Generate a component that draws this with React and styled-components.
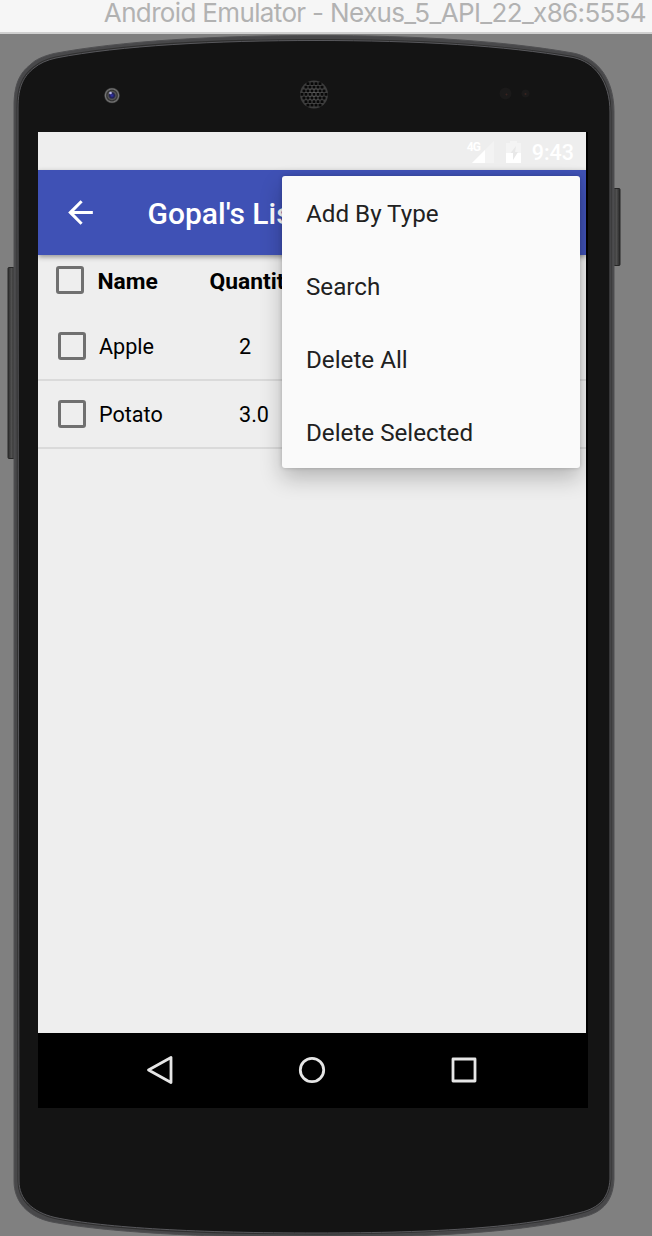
import React from "react";
import styled, { createGlobalStyle } from "styled-components";

const GlobalStyle = createGlobalStyle`
  * { box-sizing: border-box; }
  html, body { margin: 0; padding: 0; background: #808080; }
  body { overflow: hidden; font-family: Roboto, "Liberation Sans", sans-serif; }
`;

const Window = styled.div`
  width: 652px;
  height: 1236px;
  display: flex;
  flex-direction: column;
  overflow: hidden;
  background: #808080;
`;

const TitleBar = styled.header`
  flex: none;
  height: 34px;
  padding-right: 6px;
  display: flex;
  justify-content: flex-end;
  background: #f6f6f6;
  border-bottom: 2px solid #d0d0d0;
  color: #b2b2b2;
  font: 400 26px/26px Inter, sans-serif;
  letter-spacing: -0.65px;
  white-space: nowrap;
`;

const Device = styled.main`
  position: relative;
  flex: 1;
  padding: 98px 0 0 38px;
`;

const Shell = styled.svg`
  position: absolute;
  left: 0;
  top: 0;
  display: block;
`;

const Screen = styled.div`
  position: relative;
  width: 550px;
  height: 976px;
  display: flex;
  flex-direction: column;
  background: #000;
`;

const Display = styled.div`
  position: relative;
  width: 548px;
  height: 901px;
  display: flex;
  flex-direction: column;
  overflow: hidden;
  background: #eeeeee;
`;

const StatusBar = styled.div`
  flex: none;
  height: 38px;
  padding: 1px 12px 0 0;
  display: flex;
  align-items: center;
  justify-content: flex-end;
  color: #fff;
`;

const Clock = styled.span`
  padding-top: 2px;
  font-size: 21.5px;
  line-height: 35px;
  font-weight: 500;
  margin-left: 11px;
`;

const AppBar = styled.div`
  position: relative;
  flex: none;
  height: 85px;
  padding: 0 0 0 24px;
  display: flex;
  align-items: center;
  background: #3f51b5;
  color: #fff;
  box-shadow: 0 2px 5px rgba(0, 0, 0, 0.38);
`;

const AppTitle = styled.h1`
  margin: 0;
  padding: 2px 0 0 48.5px;
  font-size: 30px;
  line-height: 40px;
  font-weight: 500;
  white-space: nowrap;
`;

const Row = styled.div`
  flex: none;
  height: ${(p) => (p.$header ? 58 : 68)}px;
  padding: ${(p) => (p.$header ? "0 0 8px 18px" : "0 0 0 20px")};
  display: grid;
  grid-template-columns: ${(p) => (p.$header ? "41.5px 112px 1fr" : "41px 140px 1fr")};
  align-items: center;
  border-bottom: ${(p) => (p.$header ? "0" : "2px solid #dadada")};
  color: #000;
  font-size: ${(p) => (p.$header ? 22.8 : 21.6)}px;
  font-weight: ${(p) => (p.$header ? 700 : 400)};
  line-height: 28px;
`;

const Cell = styled.span`
  padding-top: ${(p) => (p.$header ? 3 : 2)}px;
`;

const Checkbox = styled.span`
  width: 28px;
  height: 28px;
  border: 3px solid #707070;
  border-radius: 3px;
`;

const Menu = styled.nav`
  position: absolute;
  top: 44px;
  right: 6px;
  width: 298.5px;
  height: 292px;
  display: flex;
  flex-direction: column;
  border-radius: 3px;
  background: #fafafa;
  box-shadow: 0 10px 22px rgba(0, 0, 0, 0.24), 0 0 4px rgba(0, 0, 0, 0.18);
`;

const MenuItem = styled.div`
  flex: 1;
  padding: 2px 0 0 24.5px;
  display: flex;
  align-items: center;
  color: #212121;
  font-size: 24.2px;
  line-height: 30px;
`;

const NavBar = styled.div`
  flex: 1;
  padding: 0 2px 2px 0;
  display: flex;
  align-items: center;
  justify-content: center;
  gap: 124px;
`;

const items = [
  { name: "Apple", quantity: "2" },
  { name: "Potato", quantity: "3.0" },
];
const actions = ["Add By Type", "Search", "Delete All", "Delete Selected"];

const holes = [];
for (let r = -3; r <= 3; r++) {
  for (let c = -3; c <= 3; c++) {
    const x = c * 4 + (r % 2 ? 2 : 0);
    const y = r * 3.6;
    if (Math.hypot(x, y) < 12.4) holes.push([x, y]);
  }
}

const BODY =
  "M14 150V72C14 50 20 39 30 31C36 25 44 22 54 19.500C120 7 215 1.500 316 1.500C418 1.500 505 7 573 19C598 24 614 45 614 78V1145C613 1166 604 1178 583 1183C530 1197 440 1203.500 316 1203.500C200 1203.500 105 1198 52 1188C28 1183 14 1168 14 1147Z";
const GLASS =
  "M18 150V74C18 52 24 42 34 34C40 29 47 26 56 24C120 11.500 215 6.500 316 6.500C418 6.500 505 11.500 573 23.500C595 28 610 48 610 78V1145C609 1163 600 1174 580 1178.500C525 1193 440 1199 316 1199C200 1199 105 1194 55 1183.500C32 1178 19 1165 19 1147Z";

function PhoneShell() {
  return (
    <Shell width="652" height="1202" viewBox="0 0 652 1202" aria-hidden="true">
      <defs>
        <linearGradient id="key" x1="0" x2="1" y1="0" y2="0">
          <stop offset="0" stopColor="#2c2c2c" />
          <stop offset="0.5" stopColor="#505050" />
          <stop offset="1" stopColor="#242424" />
        </linearGradient>
        <radialGradient id="lens">
          <stop offset="0" stopColor="#3333b5" />
          <stop offset="0.3" stopColor="#202050" />
          <stop offset="0.5" stopColor="#555" />
          <stop offset="0.65" stopColor="#303030" />
          <stop offset="0.82" stopColor="#777" />
          <stop offset="1" stopColor="#222" />
        </radialGradient>
        <radialGradient id="speaker">
          <stop offset="0" stopColor="#656565" />
          <stop offset="1" stopColor="#3a3a3a" />
        </radialGradient>
      </defs>
      <rect x="8" y="233.500" width="7" height="191" rx="1" fill="url(#key)" stroke="#282828" />
      <rect x="613" y="154.500" width="7" height="77" rx="1" fill="url(#key)" stroke="#262626" />
      <path d={BODY} fill="#48484a" stroke="#505052" strokeWidth="1" />
      <path d={GLASS} fill="#141414" stroke="#303030" strokeWidth="3" />
      <path d={GLASS} fill="#141414" stroke="#58585c" strokeWidth="1" />
      <circle cx="112" cy="61.500" r="8" fill="url(#lens)" />
      <circle cx="110.500" cy="59" r="1.300" fill="#b8b8e8" />
      <circle cx="314" cy="60.500" r="14" fill="url(#speaker)" />
      {holes.map(([x, y]) => (
        <rect key={`${x},${y}`} x={312.5 + x} y={59 + y} width="3" height="2.800" rx="0.600" fill="#080808" />
      ))}
      <circle cx="505.500" cy="59.500" r="6" fill="#1b1a1a" />
      <circle cx="525.500" cy="59.500" r="4" fill="#1b1a1a" />
      <circle cx="506.500" cy="60.500" r="1" fill="#3a2420" />
      <circle cx="525.500" cy="60" r="1" fill="#3a2420" />
    </Shell>
  );
}

const SignalArea = styled.div`
  display: flex;
  align-items: center;
`;

const Network = styled.span`
  align-self: flex-start;
  width: 14px;
  margin-right: -9px;
  font-size: 12px;
  line-height: 12px;
  font-weight: 700;
  letter-spacing: -0.8px;
`;

const BatteryIcon = styled.svg`
  margin-left: 12px;
`;

export default function App() {
  return (
    <Window>
      <GlobalStyle />
      <TitleBar>Android Emulator - Nexus_5_API_22_x86:5554</TitleBar>
      <Device>
        <PhoneShell />
        <Screen>
          <Display>
            <StatusBar>
              <SignalArea>
                <Network>4G</Network>
                <svg width="22" height="22" viewBox="0 0 22 22">
                  <path d="M22 0V22H0Z" fill="#f3f3f3" />
                  <path d="M13 9V22H0Z" fill="#fff" />
                </svg>
              </SignalArea>
              <BatteryIcon width="15" height="22" viewBox="0 0 15 22">
                <path d="M4 0H11V2H15V12H0V2H4Z" fill="#f4f4f4" />
                <path d="M0 12H15V22H0Z" fill="#fff" />
                <path d="M10 5L4.500 12H7V19L12 11H9Z" fill="#e8e8e8" />
              </BatteryIcon>
              <Clock>9:43</Clock>
            </StatusBar>
            <AppBar>
              <svg width="37" height="37" viewBox="0 0 24 24" fill="#fff">
                <path d="M20 11H7.830l5.590-5.590L12 4l-8 8 8 8 1.410-1.410L7.830 13H20v-2z" />
              </svg>
              <AppTitle>Gopal's List</AppTitle>
            </AppBar>
            <Row $header>
              <Checkbox />
              <Cell $header>Name</Cell>
              <Cell $header>Quantity</Cell>
            </Row>
            {items.map((item) => (
              <Row key={item.name}>
                <Checkbox />
                <Cell>{item.name}</Cell>
                <Cell>{item.quantity}</Cell>
              </Row>
            ))}
            <Menu>
              {actions.map((label) => (
                <MenuItem key={label}>{label}</MenuItem>
              ))}
            </Menu>
          </Display>
          <NavBar>
            <svg width="28" height="30" viewBox="0 0 28 30" fill="none" stroke="#e6e6e6" strokeWidth="2.800" strokeLinejoin="round">
              <path d="M2.500 15L25 2.500V27.500Z" />
            </svg>
            <svg width="28" height="30" viewBox="0 0 28 30" fill="none" stroke="#e6e6e6" strokeWidth="2.800">
              <circle cx="14" cy="15" r="11.700" />
            </svg>
            <svg width="28" height="30" viewBox="0 0 28 30" fill="none" stroke="#e6e6e6" strokeWidth="2.800" strokeLinejoin="round">
              <rect x="3" y="4" width="22" height="22" />
            </svg>
          </NavBar>
        </Screen>
      </Device>
    </Window>
  );
}
